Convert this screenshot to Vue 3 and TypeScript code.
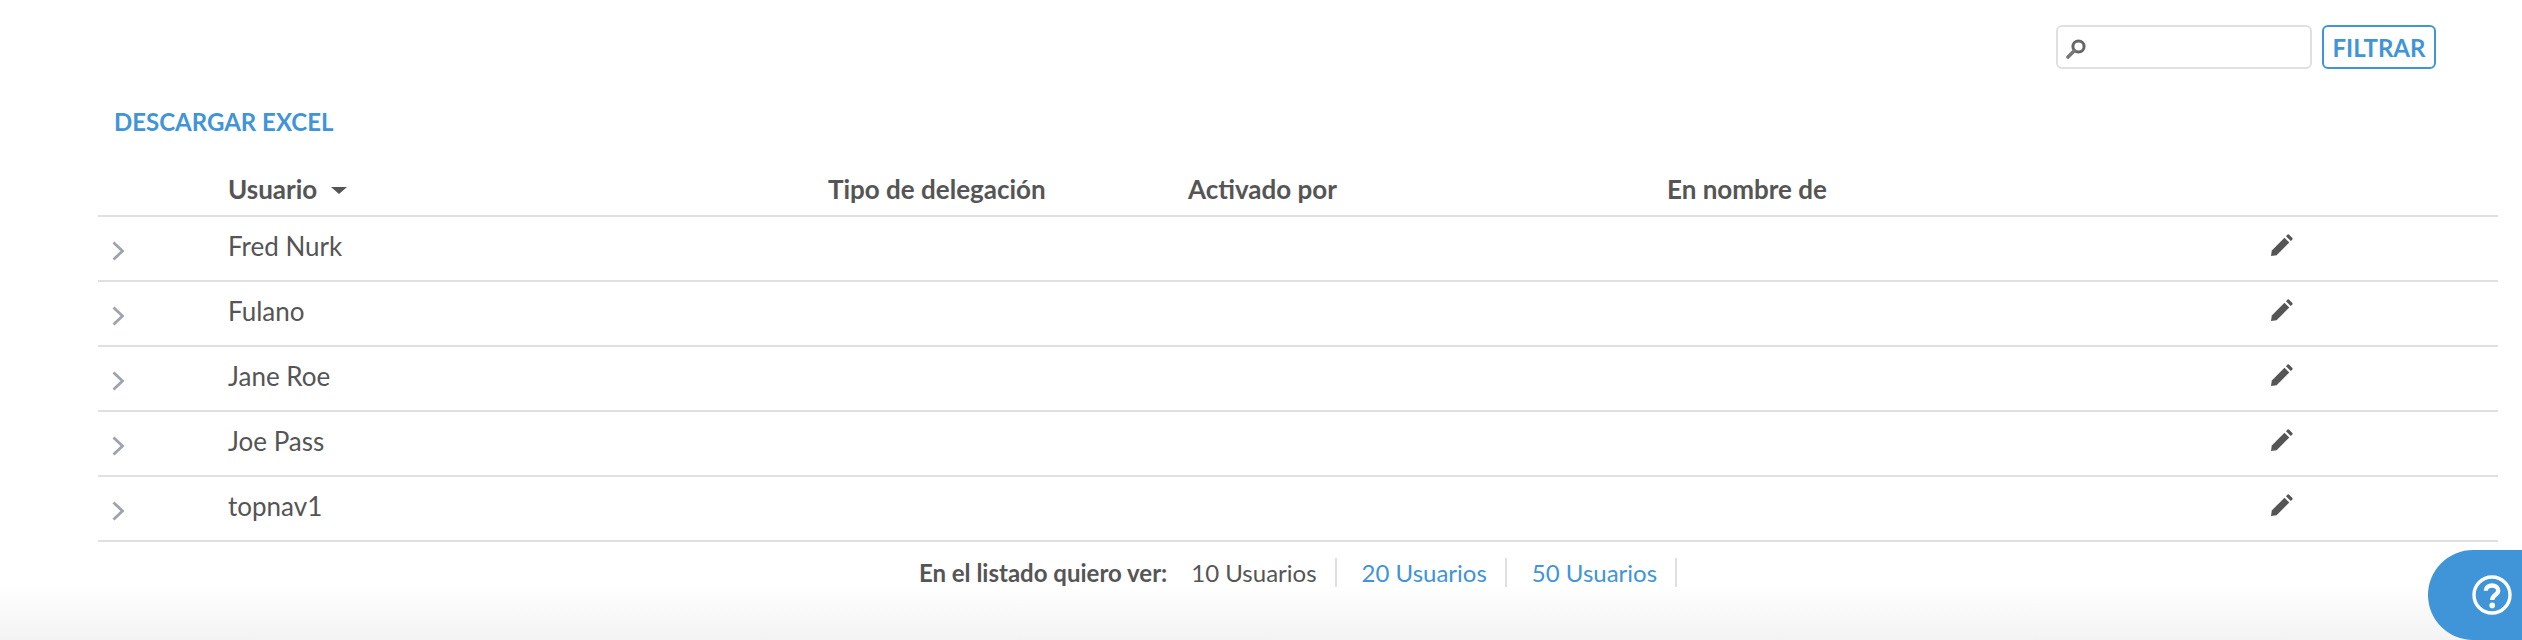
<template>
  <div class="page">
    <div class="toolbar">
      <div class="search-box">
        <svg class="search-icon" viewBox="0 0 20 20" width="20" height="20">
          <circle cx="12.5" cy="7.5" r="5.6" fill="none" stroke="#666" stroke-width="3" />
          <path d="M8.5 11.5 L2 18" stroke="#777" stroke-width="3.6" stroke-linecap="round" />
        </svg>
        <input class="search-input" type="text" />
      </div>
      <button class="filter-btn">FILTRAR</button>
    </div>

    <a class="excel-link">DESCARGAR EXCEL</a>

    <div class="table">
      <div class="row head">
        <div></div>
        <div class="sortable">Usuario <span class="caret"></span></div>
        <div>Tipo de delegación</div>
        <div>Activado por</div>
        <div>En nombre de</div>
        <div></div>
      </div>
      <div class="row" v-for="u in users" :key="u">
        <div class="chev-cell">
          <svg viewBox="0 0 12 20" width="12" height="20">
            <path d="M1.5 1.5 L10.5 10 L1.5 18.5" fill="none" stroke="#9fa3ad" stroke-width="2.8" />
          </svg>
        </div>
        <div class="name">{{ u }}</div>
        <div></div>
        <div></div>
        <div></div>
        <div class="edit-cell">
          <svg viewBox="0 0 22 22" width="22" height="22">
            <path d="M0 22 L0.8 16.4 L13.5 3.7 L18.3 8.5 L5.6 21.2 Z" fill="#555" />
            <path d="M15 2.2 L16.6 0.6 Q17.2 0 17.9 0.6 L21.4 4.1 Q22 4.8 21.4 5.4 L19.8 7 Z" fill="#555" />
          </svg>
        </div>
      </div>
    </div>

    <div class="pager">
      <span class="pager-label">En el listado quiero ver:</span>
      <span class="pager-item current">10 Usuarios</span>
      <a class="pager-item">20 Usuarios</a>
      <a class="pager-item">50 Usuarios</a>
    </div>

    <div class="help">
      <svg viewBox="0 0 40 40" width="40" height="40">
        <circle cx="20" cy="20" r="18" fill="none" stroke="#fff" stroke-width="3.4" />
        <path d="M13.8 15.8 C13.8 8.8 26.2 8.8 26.2 15.4 C26.2 19.8 20.2 19.6 20.2 25" fill="none" stroke="#fff" stroke-width="4.4" />
        <circle cx="20.2" cy="30.4" r="2.8" fill="#fff" />
      </svg>
    </div>
  </div>
</template>

<script setup lang="ts">
const users: string[] = ['Fred Nurk', 'Fulano', 'Jane Roe', 'Joe Pass', 'topnav1'];
</script>

<style scoped>
.page {
  position: relative;
  height: 640px;
  overflow: hidden;
  padding: 25px 24px 0 98px;
  box-sizing: border-box;
  background: linear-gradient(to bottom, #fff 0, #fff 585px, #f3f3f3 640px);
  font-family: Lato, 'Open Sans', sans-serif;
  color: #555;
}

.toolbar {
  display: flex;
  justify-content: flex-end;
  gap: 10px;
  padding-right: 62px;
}

.search-box {
  position: relative;
  width: 256px;
  height: 44px;
}
.search-icon {
  position: absolute;
  left: 10px;
  top: 14px;
}
.search-input {
  width: 100%;
  height: 100%;
  box-sizing: border-box;
  border: 2px solid #e0e0e0;
  border-radius: 6px;
  background: #fff;
  outline: none;
}

.filter-btn {
  width: 114px;
  height: 44px;
  border: 2px solid #4094d8;
  border-radius: 6px;
  background: #fff;
  color: #4094d8;
  font-family: inherit;
  font-size: 24px;
  font-weight: 700;
  padding: 0;
}

.excel-link {
  display: block;
  margin: 39px 0 0 16px;
  font-size: 24px;
  line-height: 28px;
  font-weight: 700;
  color: #4094d8;
  width: max-content;
}

.table {
  margin-top: 27px;
}

.row {
  display: grid;
  grid-template-columns: 130px 600px 360px 479px 604px 1fr;
  align-items: center;
  height: 65px;
  box-sizing: border-box;
  border-bottom: 2px solid #e0e0e0;
  font-size: 26px;
}
.row.head {
  height: 54px;
  font-weight: 700;
}
.sortable {
  display: flex;
  align-items: center;
}
.caret {
  width: 0;
  height: 0;
  margin-left: 14px;
  margin-top: 2px;
  border-left: 8px solid transparent;
  border-right: 8px solid transparent;
  border-top: 7px solid #555;
}

.chev-cell {
  padding: 4px 0 0 14px;
  display: flex;
}
.name {
  padding-bottom: 6px;
}
.edit-cell {
  display: flex;
  padding-bottom: 8px;
}

.pager {
  display: flex;
  justify-content: center;
  align-items: center;
  margin-top: 16px;
  font-size: 24px;
}
.pager-label {
  font-weight: 700;
  margin-right: 24px;
}
.pager-item {
  line-height: 29px;
  padding-right: 18px;
  border-right: 2px solid #e0e0e0;
  margin-right: 25px;
  color: #4094d8;
}
.pager-item:last-child {
  margin-right: 0;
}
.pager-item.current {
  color: #555;
}

.help {
  position: absolute;
  right: -45px;
  top: 550px;
  width: 139px;
  height: 90px;
  border-radius: 45px 0 0 45px;
  background: #4094d8;
  display: flex;
  align-items: center;
  padding-left: 44px;
  box-sizing: border-box;
}
</style>

<style>
body {
  margin: 0;
}
</style>
